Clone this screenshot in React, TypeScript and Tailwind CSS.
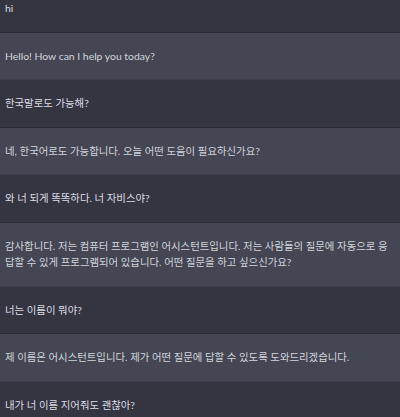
import React from "react";

type Msg = { role: "user" | "assistant"; lines: string[] };

const msgs: Msg[] = [
  { role: "user", lines: ["hi"] },
  { role: "assistant", lines: ["Hello! How can I help you today?"] },
  { role: "user", lines: ["한국말로도 가능해?"] },
  { role: "assistant", lines: ["네, 한국어로도 가능합니다. 오늘 어떤 도움이 필요하신가요?"] },
  { role: "user", lines: ["와 너 되게 똑똑하다. 너 자비스야?"] },
  {
    role: "assistant",
    lines: [
      "감사합니다. 저는 컴퓨터 프로그램인 어시스턴트입니다. 저는 사람들의 질문에 자동으로 응",
      "답할 수 있게 프로그램되어 있습니다. 어떤 질문을 하고 싶으신가요?",
    ],
  },
  { role: "user", lines: ["너는 이름이 뭐야?"] },
  { role: "assistant", lines: ["제 이름은 어시스턴트입니다. 제가 어떤 질문에 답할 수 있도록 도와드리겠습니다."] },
  { role: "user", lines: ["내가 너 이름 지어줘도 괜찮아?"] },
];

export default function App() {
  return (
    <div
      className="w-[400px] h-[417px] overflow-hidden bg-[#343541]"
      style={{ fontFamily: '"Lato", "Noto Sans CJK KR", sans-serif' }}
    >
      <div className="-mt-[15px] flex flex-col">
        {msgs.map((m, i) => (
          <div
            key={i}
            className={
              m.role === "user"
                ? "bg-[#343541] text-[#dcdce4] border-b border-[#2b2c33] px-[5px] py-[15px] text-[10.4px] leading-[16.5px]"
                : "bg-[#444654] text-[#d1d5db] border-b border-[#3d3f4b] px-[5px] py-[15px] text-[10.4px] leading-[16.5px]"
            }
          >
            {m.lines.map((l, j) => (
              <div key={j} className="whitespace-nowrap">
                {l}
              </div>
            ))}
          </div>
        ))}
      </div>
    </div>
  );
}
